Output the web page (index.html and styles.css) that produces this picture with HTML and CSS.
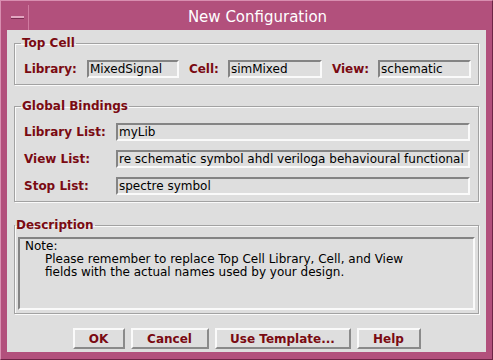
FILE: index.html
```html
<!DOCTYPE html>
<html lang="en">
<head>
    <meta charset="UTF-8">
    <title>New Configuration</title>
    <link rel="stylesheet" href="styles.css">
</head>
<body>
    <div class="window">
        <div class="titlebar">
            <div class="menu-btn"><span class="dash"></span></div>
            <div class="title">New Configuration</div>
        </div>

        <div class="dialog">
            <fieldset class="group top-cell">
                <legend>Top Cell</legend>
                <div class="cell-row">
                    <label for="lib" class="first">Library:</label>
                    <input type="text" id="lib" class="entry w-lib" value="MixedSignal">
                    <label for="cell">Cell:</label>
                    <input type="text" id="cell" class="entry w-cell" value="simMixed">
                    <label for="view">View:</label>
                    <input type="text" id="view" class="entry w-view" value="schematic">
                </div>
            </fieldset>

            <fieldset class="group bindings">
                <legend>Global Bindings</legend>
                <div class="bind-grid">
                    <label for="libList">Library List:</label>
                    <input type="text" id="libList" class="entry" value="myLib">
                    <label for="viewList">View List:</label>
                    <input type="text" id="viewList" class="entry" value="re schematic symbol ahdl veriloga behavioural functional">
                    <label for="stopList">Stop List:</label>
                    <input type="text" id="stopList" class="entry" value="spectre symbol">
                </div>
            </fieldset>

            <fieldset class="group description">
                <legend>Description</legend>
                <div class="note">
                    <div>Note:</div>
                    <div class="note-body">
                        Please remember to replace Top Cell Library, Cell, and View<br>
                        fields with the actual names used by your design.
                    </div>
                </div>
            </fieldset>

            <div class="buttons">
                <button class="btn w-ok">OK</button>
                <button class="btn w-cancel">Cancel</button>
                <button class="btn w-tmpl">Use Template...</button>
                <button class="btn w-help">Help</button>
            </div>
        </div>
    </div>
</body>
</html>
```

FILE: styles.css
```css
body {
    margin: 0;
    font-family: "DejaVu Sans", sans-serif;
    font-size: 12px;
}

.window {
    width: 493px;
    height: 360px;
    box-sizing: border-box;
    padding: 4px 6px 7px 6px;
    background-color: #b2507c;
    border-top: 1px solid #d88eb0;
    border-left: 1px solid #d88eb0;
    border-right: 1px solid #6e2446;
    border-bottom: 1px solid #6e2446;
    display: flex;
    flex-direction: column;
}

.titlebar {
    height: 25px;
    display: flex;
    flex-shrink: 0;
}

.menu-btn {
    width: 21px;
    border-right: 1px solid #d07aa0;
    display: flex;
    align-items: center;
    justify-content: center;
}

.dash {
    width: 13px;
    height: 2px;
    background-color: #e2a6c0;
    border-bottom: 1px solid #7c2c52;
}

.title {
    flex: 1;
    text-align: center;
    color: white;
    font-size: 15px;
    line-height: 25px;
}

.dialog {
    flex: 1;
    background-color: #dedede;
    padding: 6px 7px 0 7px;
    display: flex;
    flex-direction: column;
}

.group {
    margin: 0;
    min-width: 0;
    border: 1px solid #a2a2a2;
    box-shadow: inset 1px 1px 0 #fafafa, 1px 1px 0 #fafafa;
}

.group legend {
    padding: 0 1px;
    margin-left: -3px;
    line-height: 14px;
    font-weight: bold;
    color: #7a0a12;
}

label {
    font-weight: bold;
    color: #7a0a12;
    white-space: nowrap;
}

.entry {
    box-sizing: border-box;
    height: 18px;
    margin: 0;
    padding: 0 1px;
    font-family: "DejaVu Sans", sans-serif;
    font-size: 12px;
    color: #000;
    background-color: #dedede;
    border: 2px solid;
    border-color: #848484 #fafafa #fafafa #848484;
    outline: none;
}

.top-cell {
    padding: 10px 8px 6px 9px;
}

.cell-row {
    display: flex;
    align-items: center;
}

.cell-row label {
    margin-right: 9px;
}

.cell-row label.first {
    margin-right: 10px;
}

.cell-row .entry {
    margin-right: 10px;
}

.cell-row .w-view {
    margin-right: 0;
}

.w-lib { width: 92px; }
.w-cell { width: 94px; }
.w-view { width: 93px; }

.bindings {
    margin-top: 14px;
    padding: 10px 8px 6px 9px;
}

.bind-grid {
    display: grid;
    grid-template-columns: 92px 1fr;
    grid-auto-rows: 18px;
    row-gap: 9px;
    align-items: center;
}

.description {
    margin-top: 16px;
    padding: 5px 3px 3px 3px;
}

.note {
    height: 73px;
    box-sizing: border-box;
    padding: 1px 5px;
    line-height: 13px;
    border: 2px solid;
    border-color: #848484 #fafafa #fafafa #848484;
}

.note-body {
    padding-left: 20px;
}

.buttons {
    margin-top: 14px;
    display: flex;
    justify-content: center;
    gap: 6px;
}

.btn {
    height: 21px;
    box-sizing: border-box;
    padding: 0;
    font-family: "DejaVu Sans", sans-serif;
    font-size: 12px;
    font-weight: bold;
    color: #7a0a12;
    background-color: #dedede;
    border: 2px solid;
    border-color: #fafafa #8a8a8a #8a8a8a #fafafa;
}

.w-ok { width: 52px; }
.w-cancel { width: 78px; }
.w-tmpl { width: 136px; }
.w-help { width: 64px; }
```
